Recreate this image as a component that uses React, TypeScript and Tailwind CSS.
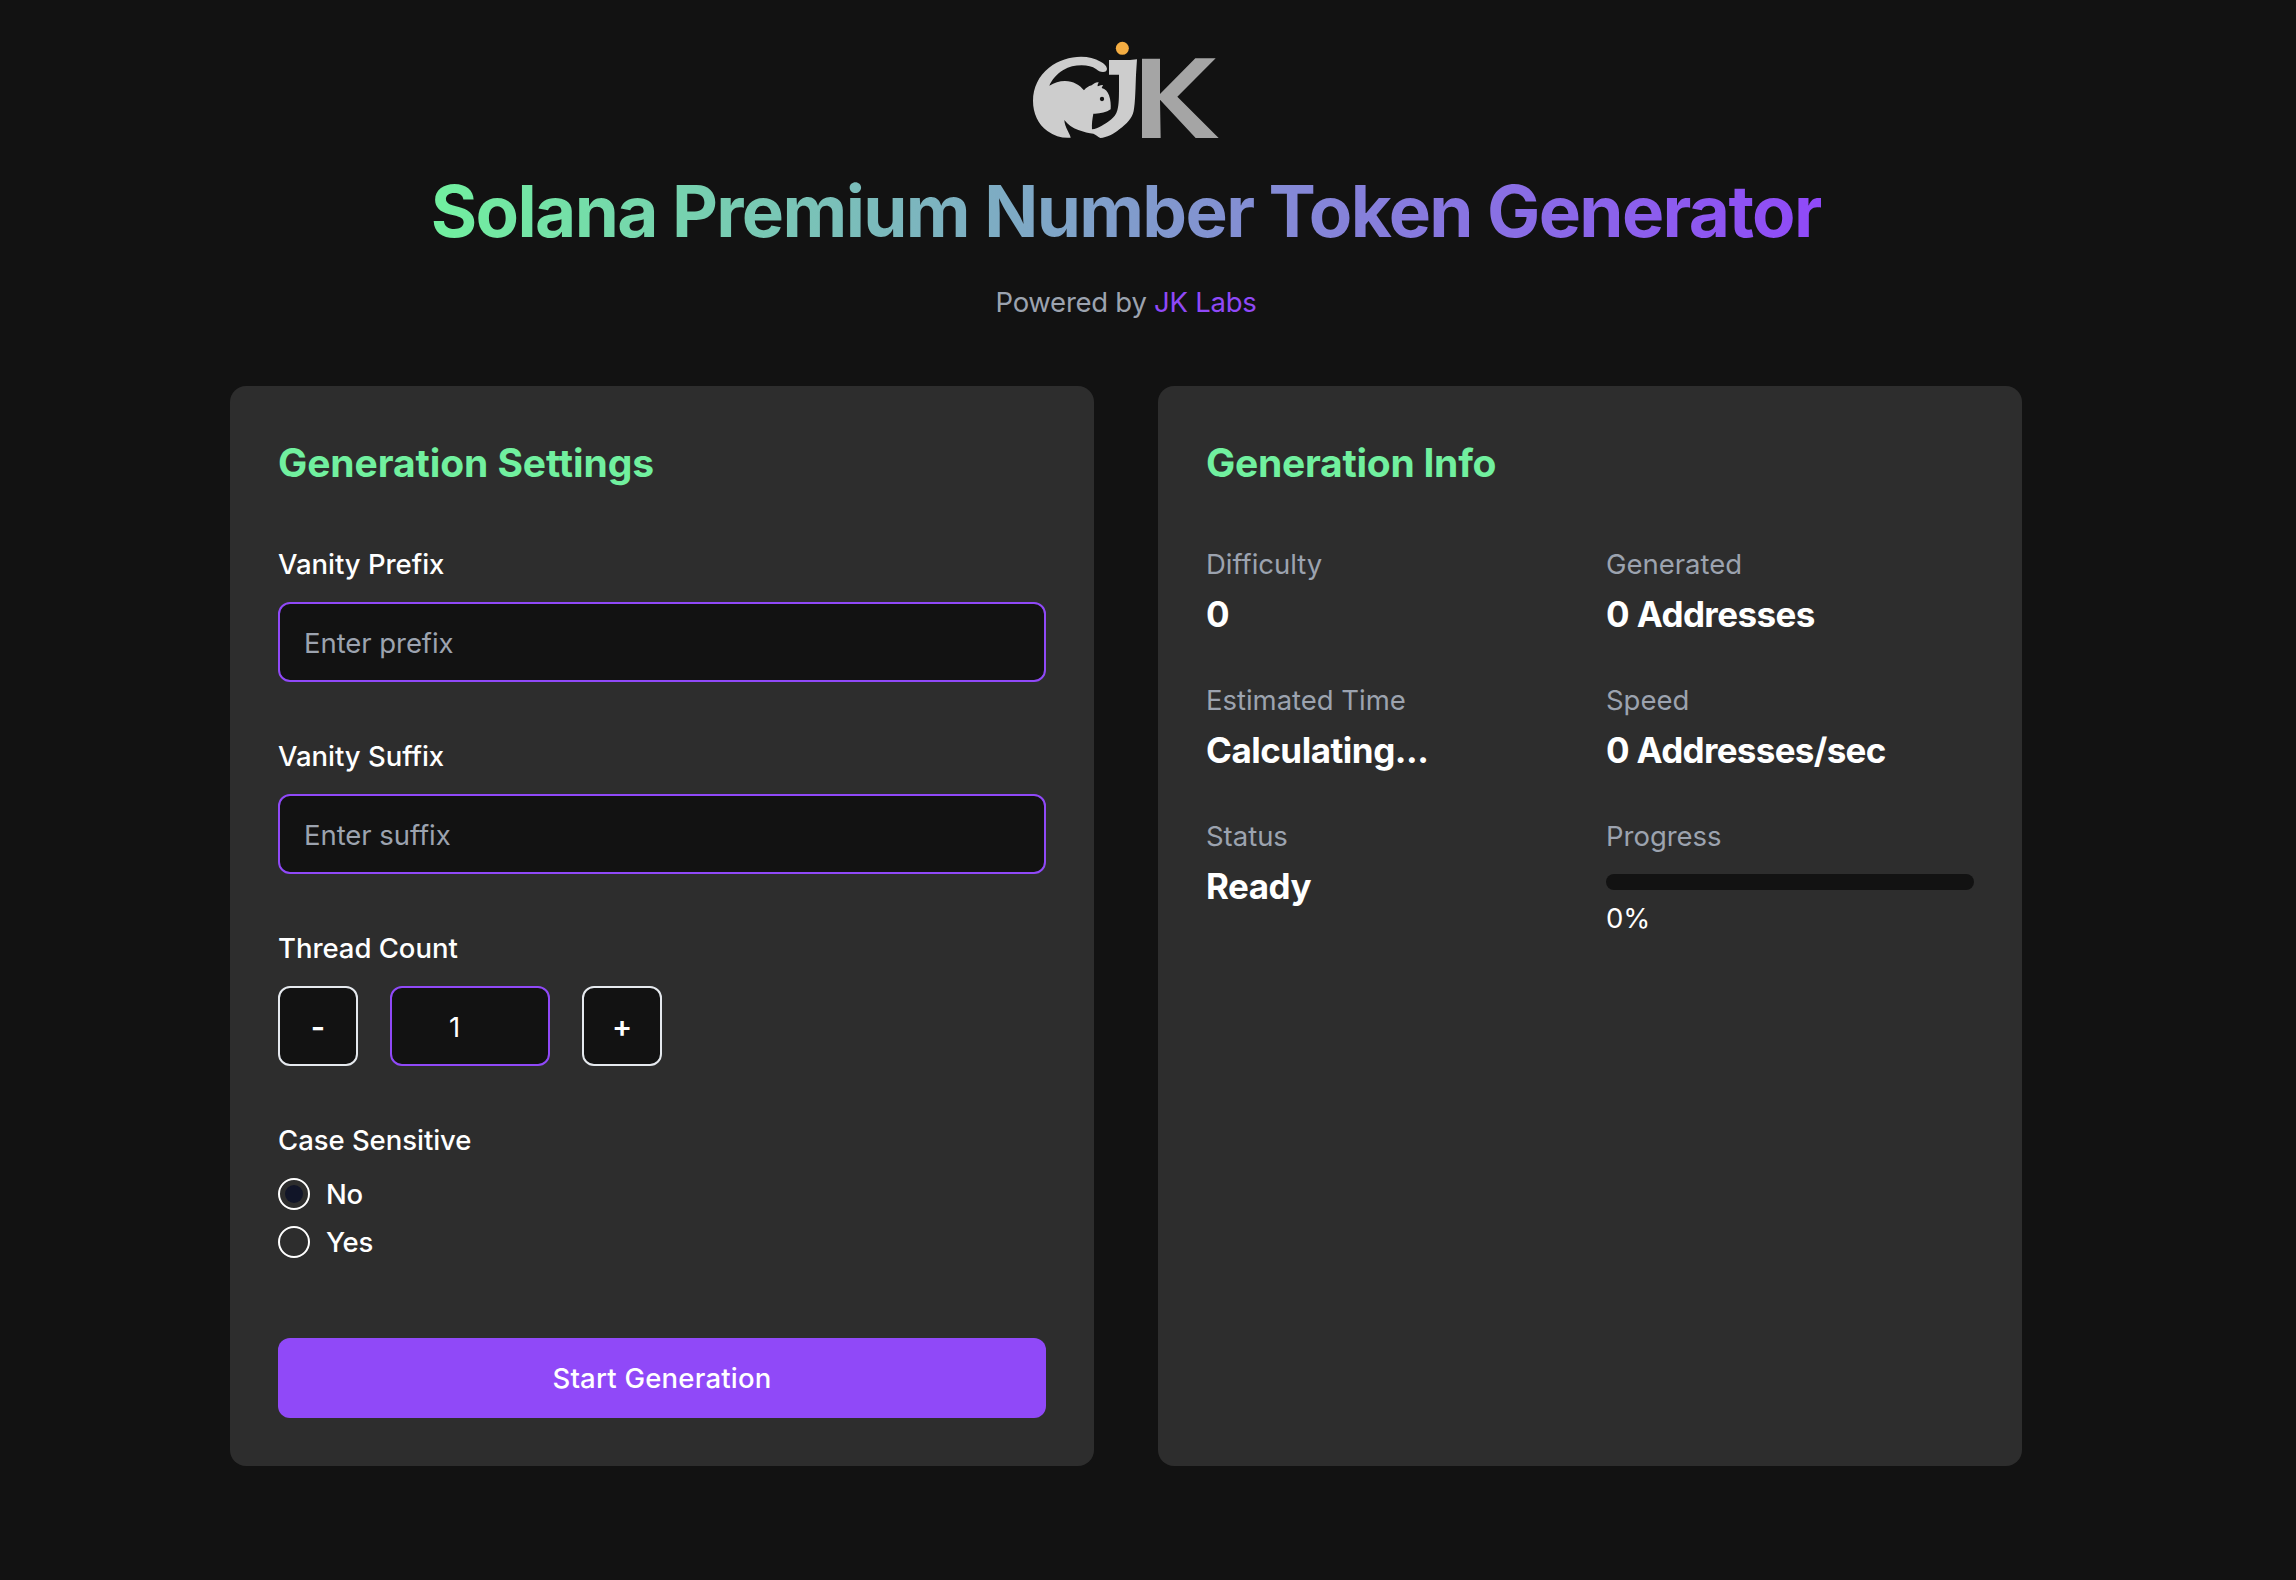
import type { ReactNode } from "react";

function Logo() {
  return (
    <svg viewBox="66 30 564 300" className="h-[100px] w-[188px]" role="img" aria-label="JK Labs logo">
      <path
        fill="#cdcdcd"
        d="M291 116C290 108 283 101 272 95C254 85 236 80 213 80C180 80 146 90 117 113C86 137 69 173 69 212C69 250 84 282 112 303C134 319 158 325 182 323C180 311 164 292 163 270C174 284 187 294 205 300C220 305 238 311 250 311C258 314 263 320 271 324C290 323 312 312 328 298C351 281 366 265 371 243C376 222 377 160 378 134L381 88L360 90H297V134H327V170C327 200 327 222 322 241C316 264 294 277 274 288C264 293 256 298 246 298C245 282 247 267 250 251C268 252 288 248 302 238C303 226 302 210 297 196C293 184 286 177 275 174L279 165C273 164 268 167 263 169C262 164 265 161 266 157C257 156 251 161 245 166C235 168 228 174 222 181C209 165 190 153 165 153C148 153 133 158 118 167C125 151 140 131 160 120C177 110 195 106 215 106C233 106 247 110 258 117C265 123 270 126 279 126C287 126 291 122 291 116Z"
      />
      <circle cx="276" cy="207" r="6.5" fill="#121212" />
      <circle cx="337" cy="55" r="19.5" fill="#f4ad42" />
      <path fill="#a5a5a5" d="M396 86H450V192L556 85H617L502 200L626 324H557L450 209L452 324H396Z" />
    </svg>
  );
}

function Card({ title, tracking, children }: { title: string; tracking: string; children: ReactNode }) {
  return (
    <section className="flex-1 rounded-2xl bg-[#2d2d2d] px-12 pt-[51px] pb-12">
      <h2 className={`text-[39px] leading-[52px] font-bold text-[#71f09f] ${tracking}`}>{title}</h2>
      {children}
    </section>
  );
}

function Field({ label, children }: { label: string; children: ReactNode }) {
  return (
    <div className="flex flex-col gap-[17px]">
      <div className="leading-[42px] font-medium tracking-[-0.04px]">{label}</div>
      {children}
    </div>
  );
}

function TextInput({ placeholder }: { placeholder: string }) {
  return (
    <input
      type="text"
      placeholder={placeholder}
      className="h-20 w-full rounded-xl border-2 border-[#9049f8] bg-[#121212] px-6 pt-0.5 tracking-[-0.06px] outline-none placeholder:text-[#9ca3af]"
    />
  );
}

function StepButton({ children }: { children: ReactNode }) {
  return (
    <button className="flex size-20 items-center justify-center rounded-xl border-2 border-[#e5e9ee] bg-[#121212] font-semibold">
      {children}
    </button>
  );
}

function Radio({ label, checked }: { label: string; checked?: boolean }) {
  return (
    <label className="flex h-8 items-center gap-4 font-medium">
      <span className="flex size-8 items-center justify-center rounded-full border-2 border-white">
        {checked && <span className="size-[18px] rounded-full bg-[#111528]" />}
      </span>
      <span className="pt-0.5 tracking-[-0.2px]">{label}</span>
    </label>
  );
}

function Stat({ label, children }: { label: string; children: ReactNode }) {
  return (
    <div>
      <div className="leading-[42px] tracking-[-0.02px] text-[#9ca3af]">{label}</div>
      {children}
    </div>
  );
}

function Value({ tracking, children }: { tracking: string; children: ReactNode }) {
  return <div className={`text-[35px] leading-[58px] font-bold ${tracking}`}>{children}</div>;
}

export default function App() {
  return (
    <div className="flex min-h-screen flex-col items-center bg-[#121212] pt-10 pr-11 font-['Inter',sans-serif] text-[27.5px] text-white">
      <Logo />
      <h1 className="mt-[26px] bg-[linear-gradient(90deg,#71f09f,#9049f8)] bg-clip-text text-[71px] leading-[90px] font-bold tracking-[-1.64px] text-transparent">
        Solana Premium Number Token Generator
      </h1>
      <p className="mt-[25px] leading-[42px] tracking-[-0.26px] text-[#9ca3af]">
        Powered by <a className="text-[#9049f8]">JK Labs</a>
      </p>

      <main className="mt-[63px] flex h-[1080px] w-[1792px] gap-16">
        <Card title="Generation Settings" tracking="tracking-[-0.08px]">
          <div className="mt-[54px] flex flex-col gap-[53px]">
            <Field label="Vanity Prefix">
              <TextInput placeholder="Enter prefix" />
            </Field>
            <Field label="Vanity Suffix">
              <TextInput placeholder="Enter suffix" />
            </Field>
            <Field label="Thread Count">
              <div className="flex gap-8">
                <StepButton>
                  <span className="text-[31px] leading-none">-</span>
                </StepButton>
                <input
                  type="text"
                  defaultValue="1"
                  className="h-20 w-40 rounded-xl border-2 border-[#9049f8] bg-[#121212] pt-0.5 pr-[31px] text-center outline-none"
                />
                <StepButton>
                  <span className="text-[30px] leading-none">+</span>
                </StepButton>
              </div>
            </Field>
            <Field label="Case Sensitive">
              <div className="flex flex-col gap-4">
                <Radio label="No" checked />
                <Radio label="Yes" />
              </div>
            </Field>
          </div>
          <button className="mt-20 h-20 w-full rounded-xl bg-[#9049f8] pt-0.5 font-medium tracking-[0.22px]">
            Start Generation
          </button>
        </Card>

        <Card title="Generation Info" tracking="tracking-[-0.26px]">
          <div className="mt-[54px] grid grid-cols-2 gap-x-8 gap-y-9">
            <Stat label="Difficulty">
              <Value tracking="tracking-normal">0</Value>
            </Stat>
            <Stat label="Generated">
              <Value tracking="tracking-[-0.6px]">0 Addresses</Value>
            </Stat>
            <Stat label="Estimated Time">
              <Value tracking="tracking-[-0.48px]">Calculating...</Value>
            </Stat>
            <Stat label="Speed">
              <Value tracking="tracking-[-0.68px]">0 Addresses/sec</Value>
            </Stat>
            <Stat label="Status">
              <Value tracking="tracking-[-0.5px]">Ready</Value>
            </Stat>
            <Stat label="Progress">
              <div className="mt-[17px] h-4 rounded-full bg-[#121212]" />
              <div className="mt-[7px] leading-[42px]">0%</div>
            </Stat>
          </div>
        </Card>
      </main>
    </div>
  );
}
